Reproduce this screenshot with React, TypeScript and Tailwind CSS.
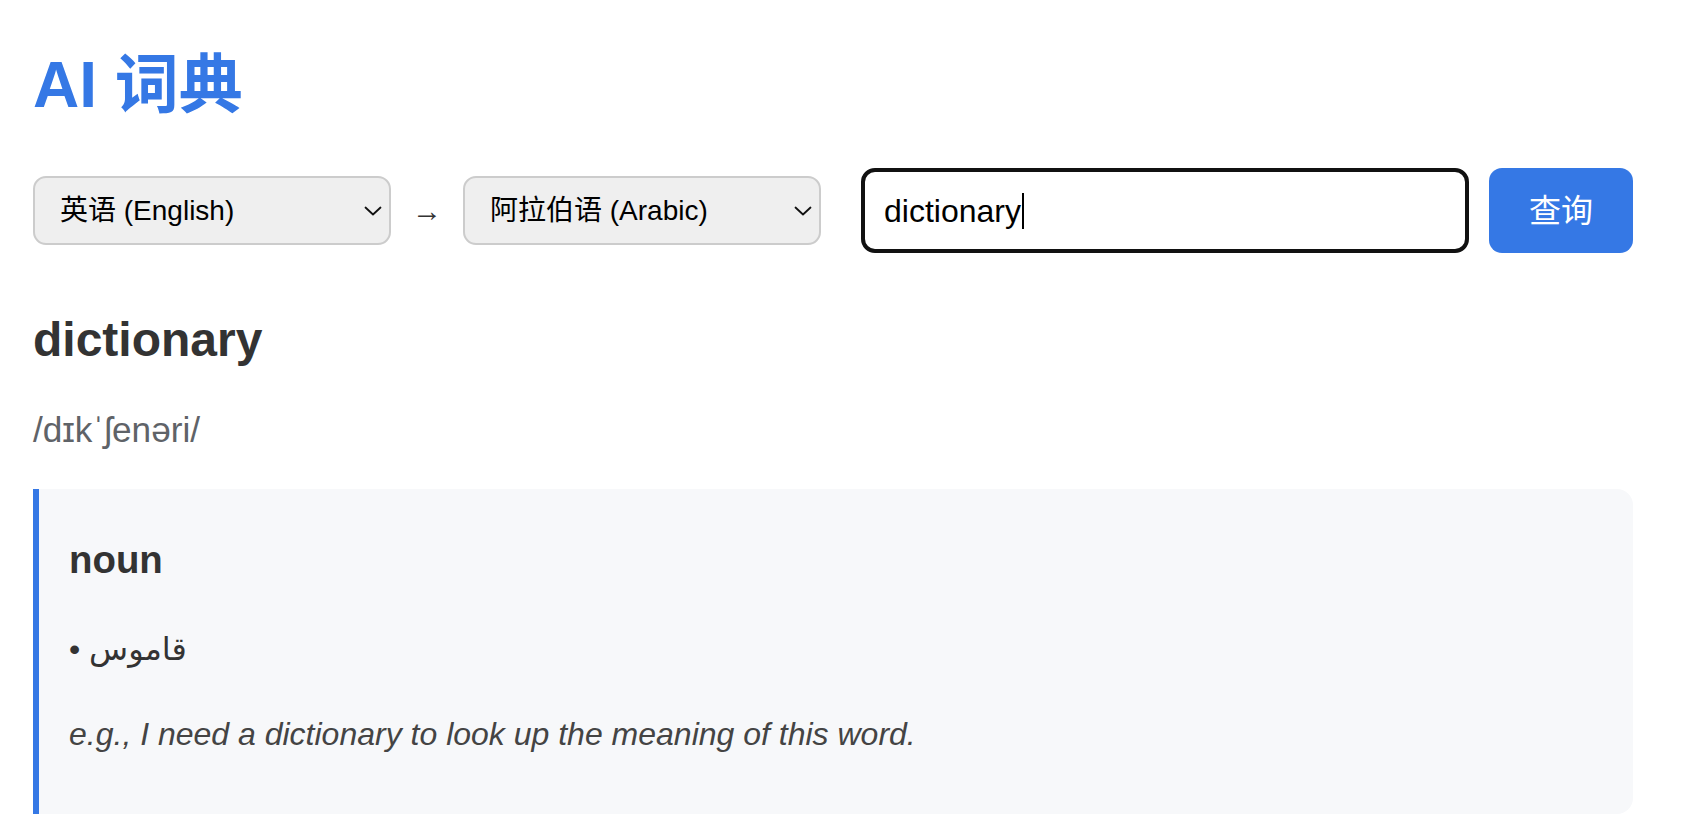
import React from "react";

const FONT = '"Liberation Sans", "Noto Sans CJK SC", "DejaVu Sans", sans-serif';

function Chevron() {
  return (
    <svg
      className="pointer-events-none absolute right-[9px] top-1/2 -translate-y-1/2"
      width="18"
      height="10"
      viewBox="0 0 18 10"
      fill="none"
    >
      <path d="M1.5 1.5 L9 8.5 L16.5 1.5" stroke="#111" strokeWidth="1.8" strokeLinecap="round" strokeLinejoin="round" />
    </svg>
  );
}

function LangSelect({ value, options }: { value: string; options: string[] }) {
  return (
    <div className="relative w-[358px] h-[69px] shrink-0">
      <select
        defaultValue={value}
        className="w-full h-full appearance-none rounded-[13px] border-2 border-[#cccccc] bg-[#efefef] pl-[25px] pr-[40px] text-[28px] text-black outline-none"
        style={{ fontFamily: FONT }}
      >
        {options.map((o) => (
          <option key={o} value={o}>
            {o}
          </option>
        ))}
      </select>
      <Chevron />
    </div>
  );
}

export default function App() {
  return (
    <div className="min-h-screen bg-white" style={{ fontFamily: FONT }}>
      <div className="w-[1633px] pl-[33px] pt-[53px] pb-[26px]">
        <h1 className="text-[64px] font-bold leading-none text-[#3578e5]">AI 词典</h1>

        <div className="mt-[51px] flex h-[85px] items-center">
          <LangSelect value="英语 (English)" options={["英语 (English)", "中文 (Chinese)", "日语 (Japanese)"]} />
          <span className="flex w-[72px] shrink-0 justify-center text-[30px] leading-none text-[#333]">→</span>
          <LangSelect value="阿拉伯语 (Arabic)" options={["阿拉伯语 (Arabic)", "英语 (English)", "法语 (French)"]} />

          <div
            role="textbox"
            className="ml-[40px] flex h-[85px] w-[608px] shrink-0 items-center rounded-[14px] border-4 border-[#111111] bg-white pl-[19px] text-[32px] text-black"
          >
            <span className="leading-none">dictionary</span>
            <span className="ml-[1px] inline-block h-[36px] w-[2px] bg-black" />
          </div>

          <button className="ml-[20px] h-[85px] w-[144px] shrink-0 rounded-[13px] bg-[#3578e5] text-[32px] text-white">
            查询
          </button>
        </div>

        <h2 className="mt-[63px] text-[48px] font-bold leading-none text-[#333333]">dictionary</h2>
        <p className="mt-[48px] text-[35.2px] leading-none text-[#5f6368]">/dɪkˈʃenəri/</p>

        <div className="mt-[42px] w-[1600px] rounded-r-[16px] border-l-[6px] border-[#3578e5] bg-[#f7f8fa] pl-[30px] pt-[52px] pb-[64px]">
          <h3 className="text-[38.4px] font-bold leading-none text-[#333333]">noun</h3>
          <p className="mt-[53px] text-[32px] leading-none text-[#333333]">• قاموس</p>
          <p className="mt-[53px] text-[32px] italic leading-none text-[#444444]">
            e.g., I need a dictionary to look up the meaning of this word.
          </p>
        </div>
      </div>
    </div>
  );
}
